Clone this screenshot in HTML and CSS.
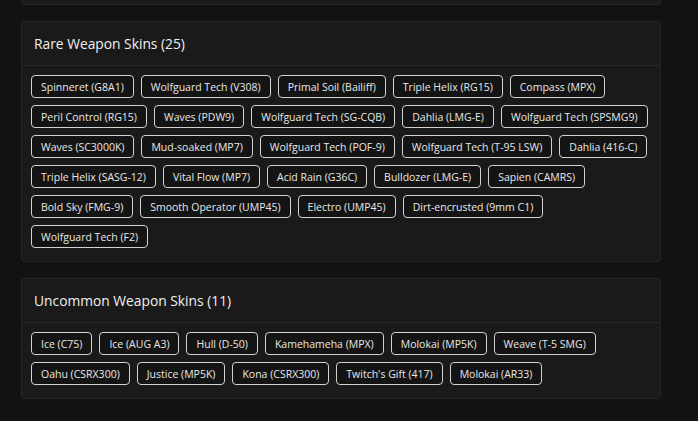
FILE: index.html
```html
<!DOCTYPE html>
<html>
<head>
<meta charset="utf-8">
<link rel="stylesheet" href="styles.css">
</head>
<body>
<div class="page">
  <div class="card card-stub"></div>

  <section class="card">
    <div class="card-header">Rare Weapon Skins (25)</div>
    <div class="card-body">
      <span class="tag">Spinneret (G8A1)</span>
      <span class="tag">Wolfguard Tech (V308)</span>
      <span class="tag">Primal Soil (Bailiff)</span>
      <span class="tag">Triple Helix (RG15)</span>
      <span class="tag">Compass (MPX)</span>
      <span class="tag">Peril Control (RG15)</span>
      <span class="tag">Waves (PDW9)</span>
      <span class="tag">Wolfguard Tech (SG-CQB)</span>
      <span class="tag">Dahlia (LMG-E)</span>
      <span class="tag">Wolfguard Tech (SPSMG9)</span>
      <span class="tag">Waves (SC3000K)</span>
      <span class="tag">Mud-soaked (MP7)</span>
      <span class="tag">Wolfguard Tech (POF-9)</span>
      <span class="tag">Wolfguard Tech (T-95 LSW)</span>
      <span class="tag">Dahlia (416-C)</span>
      <span class="tag">Triple Helix (SASG-12)</span>
      <span class="tag">Vital Flow (MP7)</span>
      <span class="tag">Acid Rain (G36C)</span>
      <span class="tag">Bulldozer (LMG-E)</span>
      <span class="tag">Sapien (CAMRS)</span>
      <span class="tag">Bold Sky (FMG-9)</span>
      <span class="tag">Smooth Operator (UMP45)</span>
      <span class="tag">Electro (UMP45)</span>
      <span class="tag">Dirt-encrusted (9mm C1)</span>
      <span class="tag">Wolfguard Tech (F2)</span>
    </div>
  </section>

  <section class="card">
    <div class="card-header">Uncommon Weapon Skins (11)</div>
    <div class="card-body">
      <span class="tag">Ice (C75)</span>
      <span class="tag">Ice (AUG A3)</span>
      <span class="tag">Hull (D-50)</span>
      <span class="tag">Kamehameha (MPX)</span>
      <span class="tag">Molokai (MP5K)</span>
      <span class="tag">Weave (T-5 SMG)</span>
      <span class="tag">Oahu (CSRX300)</span>
      <span class="tag">Justice (MP5K)</span>
      <span class="tag">Kona (CSRX300)</span>
      <span class="tag">Twitch's Gift (417)</span>
      <span class="tag">Molokai (AR33)</span>
    </div>
  </section>
</div>
</body>
</html>
```

FILE: styles.css
```css
html, body {
  margin: 0;
  padding: 0;
  background: #121212;
}

body {
  font-family: "Open Sans", "Liberation Sans", sans-serif;
  color: #e6e6e6;
}

.page {
  width: 640px;
  margin-left: 21px;
  display: flex;
  flex-direction: column;
  gap: 16px;
}

.card {
  background: #1a1a1a;
  border: 1px solid #262626;
  border-radius: 3px;
}

.card-stub {
  height: 4px;
  border-top: none;
  border-radius: 0 0 3px 3px;
}

.card-header {
  height: 43px;
  display: flex;
  align-items: center;
  padding: 0 12px;
  border-bottom: 1px solid #2a2a2a;
  font-size: 13.8px;
  color: #f0f0f0;
}

.card-body {
  display: flex;
  flex-wrap: wrap;
  gap: 7px 7px;
  padding: 9px 9px 13px 9px;
}

.tag {
  box-sizing: border-box;
  height: 23px;
  display: inline-flex;
  align-items: center;
  padding: 0 9px;
  border: 1px solid #d2d2d2;
  border-radius: 4px;
  background: #141414;
  font-size: 10.5px;
  color: #e8e8e8;
  white-space: nowrap;
}
```
